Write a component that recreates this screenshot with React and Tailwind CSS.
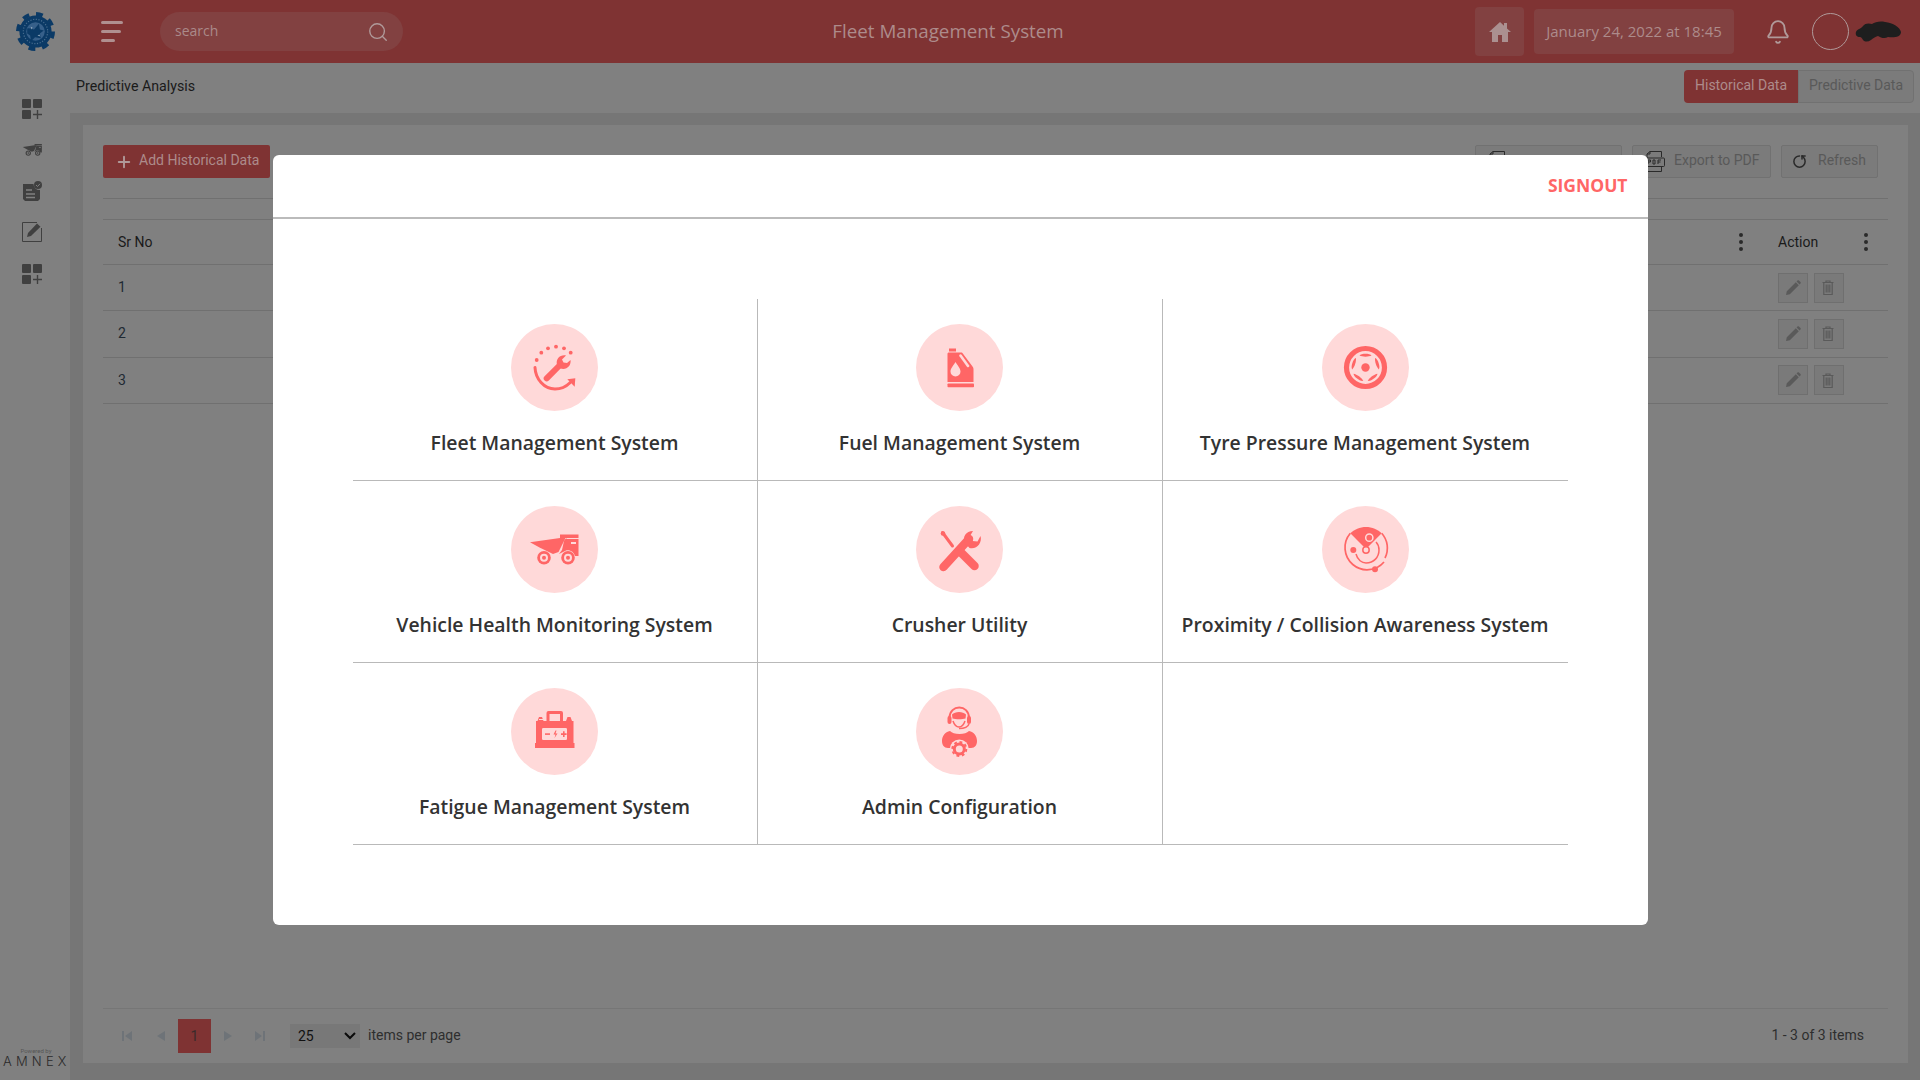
import React from "react";
import { Bell, Search, RotateCw, Plus } from "lucide-react";

const R = "#ff6666";
const P = "#ffd9d9";

const Grid = () => (
  <svg width="20" height="20" viewBox="0 0 20 20" fill="#404040">
    <rect x="0" y="0" width="9" height="9" rx="1" />
    <rect x="11" y="0" width="9" height="9" rx="1" />
    <rect x="0" y="11" width="9" height="9" rx="1" />
    <path d="M14.800 11h1.400v3.800H20v1.400h-3.800V20h-1.400v-3.800H11v-1.400h3.800z" />
  </svg>
);

const TruckShape = ({ c, bg }) => (
  <>
    <path d="M19 36.300 49 32l5.500 0-7 14-5.500 2-13-6.300z" fill={c} />
    <rect x="49" y="28.500" width="18.500" height="3.500" fill={c} />
    <path d="M56 33h11.500v17H64c-1-4-5-6.500-9-5.500l-7 3.500 3-4 2-9c.5-1.600 1.500-2.500 3-2.500z" fill={c} />
    <rect x="60" y="36" width="5" height="2" fill={bg} />
    <circle cx="33" cy="51.700" r="6.800" fill={c} />
    <circle cx="33" cy="51.700" r="4" fill={bg} />
    <circle cx="33" cy="51.700" r="2" fill={c} />
    <circle cx="57" cy="51.700" r="6.800" fill={c} />
    <circle cx="57" cy="51.700" r="4" fill={bg} />
    <circle cx="57" cy="51.700" r="2" fill={c} />
  </>
);

const icons = {
  fleet: (
    <>
      {[[25.7, 36], [30.3, 28.7], [37, 24.3], [45, 22.7], [53, 24.3], [59.7, 28.7]].map(([x, y], i) => (
        <circle key={i} cx={x} cy={y} r="1.900" fill={R} />
      ))}
      <path d="M24 43.500C24.500 55 33 65 44 65c6 0 11-2.300 15-6.300" fill="none" stroke={R} strokeWidth="3" strokeLinecap="round" />
      <path d="M56.300 55.300 64.300 54.300 63.700 62.700z" fill={R} />
      <path d="M35.700 54.300 48 42" stroke={R} strokeWidth="6" strokeLinecap="round" />
      <path d="M46 41c-1.500-6 3-10.500 9-9.500l-4 4 1.500 3 3.500.5 3.500-3c1 5.500-4 10.500-10 8.500z" fill={R} />
    </>
  ),
  fuel: (
    <>
      <rect x="33" y="24.500" width="7" height="3" fill={R} />
      <path d="M31.500 30c0-1 .5-1.500 1.500-1.500h12c1 0 1.500.5 2 1.200l9 12c1 1.300 1.500 2.300 1.500 3.800V58H31.500z" fill={R} />
      <rect x="31.500" y="59.500" width="26.500" height="3.800" rx="0.800" fill={R} />
      <path d="M44.500 31.500 52 42" stroke={P} strokeWidth="2.600" strokeLinecap="round" />
      <path d="M39.500 38c2.500 4 5 6.500 5 9.500a5 5 0 0 1-10 0c0-3 2.500-5.500 5-9.500z" fill={P} />
    </>
  ),
  tyre: (
    <>
      <circle cx="43.500" cy="43.500" r="19" fill="none" stroke={R} strokeWidth="5.200" />
      <circle cx="43.500" cy="43.500" r="4.200" fill={R} />
      {[0, 72, 144, 216, 288].map((a) => (
        <path key={a} d="M37.500 31.500c1.500-2.500 10.500-2.500 12 0-3 1.500-9 1.500-12 0z" fill={R} transform={`rotate(${a} 43.500 43.500)`} />
      ))}
    </>
  ),
  truck: <TruckShape c={R} bg={P} />,
  crusher: (
    <>
      <path d="M27.500 61 53 33" stroke={R} strokeWidth="8.500" strokeLinecap="round" />
      <path d="M49 37c-3-6 1-12 8-12l-3 5 2.500 5 5 .5 3-5.500c2 7-4 14-11 12z" fill={R} />
      <path d="M26.500 26.500 36.500 40" stroke={R} strokeWidth="3" strokeLinecap="round" />
      <circle cx="27" cy="27.500" r="2.300" fill={R} />
      <path d="M45.500 47 58.500 60" stroke={R} strokeWidth="8.500" strokeLinecap="round" />
    </>
  ),
  radar: (
    <>
      <path d="M28.300 27.300A22 22 0 1 0 62 56" fill="none" stroke={R} strokeWidth="1.700" />
      <path d="M59.700 27.300A22 22 0 0 1 63 52" fill="none" stroke={R} strokeWidth="1.700" />
      <path d="M44 43 28.300 27.300C32 23.500 38 21 44 21s12 2.500 15.700 6.300z" fill={R} />
      <circle cx="47.300" cy="31.700" r="3.600" fill={R} stroke={P} strokeWidth="1.500" />
      <path d="M34 48c1.500 6 6 9 10 9 8 0 13-6 13-13 0-3-1-6-3-8" fill="none" stroke={R} strokeWidth="1.500" />
      <circle cx="44" cy="44" r="3.200" fill={P} stroke={R} strokeWidth="1.500" />
      <circle cx="31.300" cy="44" r="3" fill={R} />
      <circle cx="53" cy="63.300" r="3" fill={R} />
    </>
  ),
  battery: (
    <>
      <path d="M35.500 33V25a2 2 0 0 1 2-2H50a2 2 0 0 1 2 2v8h-3v-7H38.500v7z" fill={R} />
      <rect x="39" y="26" width="9.500" height="7" fill={P} />
      <path d="M28 29h3l1.500 4H55l1.500-4h3l1.500 4h1.500v22h1V60H24v-5h1V33h1.500z" fill={R} />
      <rect x="31" y="40" width="25" height="12" rx="1.200" fill={P} />
      <rect x="34" y="45.300" width="5" height="1.600" fill={R} />
      <path d="M44.500 42.500 42.500 46.500h2l-1 3.500 3-4.500h-2l1-3z" fill={R} />
      <path d="M50 45.300h2v-2h1.600v2h2v1.600h-2v2h-1.600v-2h-2z" fill={R} />
      <rect x="28" y="31" width="4" height="1" fill={P} />
    </>
  ),
  admin: (
    <>
      <path d="M33.500 30c0-14 19.500-14 19.500 0" fill="none" stroke={R} strokeWidth="2" />
      <rect x="31.500" y="28" width="4" height="8" rx="2" fill={R} />
      <rect x="51" y="28" width="4" height="8" rx="2" fill={R} />
      <path d="M36 26.500c3-3.500 11-3.500 14 0l-.5 4c-3 1-10 1-13 0z" fill={R} />
      <path d="M37 33c1 3 3 6 6 6s5-3 6-6" fill="none" stroke={R} strokeWidth="1.500" />
      <path d="M53 36c-1 3-3 4.500-10 4.500" fill="none" stroke={R} strokeWidth="1.500" />
      <path d="M34 43c-5 1-8 5-8 10 0 4 2 7 6 7h23c4 0 6-3 6-7 0-5-3-9-8-10-2 2-5 3-9.500 3S36 45 34 43z" fill={R} />
      <circle cx="43.300" cy="61" r="9.500" fill={P} />
      <circle cx="43.300" cy="61" r="5" fill="none" stroke={R} strokeWidth="3" />
      <circle cx="43.300" cy="61" r="7" fill="none" stroke={R} strokeWidth="2" strokeDasharray="2.800 2.700" />
    </>
  ),
};

const systems = [
  ["Fleet Management System", "fleet"],
  ["Fuel Management System", "fuel"],
  ["Tyre Pressure Management System", "tyre"],
  ["Vehicle Health Monitoring System", "truck"],
  ["Crusher Utility", "crusher"],
  ["Proximity / Collision Awareness System", "radar"],
  ["Fatigue Management System", "battery"],
  ["Admin Configuration", "admin"],
  [null, null],
];

const Cell = ({ label, icon, index }) => (
  <div className={`h-[182px] flex flex-col items-center border-b border-[#b9b9b9] pt-[25px] ${index % 3 !== 2 ? "border-r" : ""}`}>
    {label && (
      <>
        <svg width="87" height="87" viewBox="0 0 87 87" className="shrink-0">
          <circle cx="43.500" cy="43.500" r="43.500" fill={P} />
          {icons[icon]}
        </svg>
        <div className="mt-[19px] text-[19.400px] leading-[26px] font-semibold text-[#333333] whitespace-nowrap">{label}</div>
      </>
    )}
  </div>
);

const Kebab = () => (
  <div className="flex flex-col gap-[3px] items-center w-[5px]">
    <span className="w-[4px] h-[4px] rounded-full bg-[#2a2a2a]" />
    <span className="w-[4px] h-[4px] rounded-full bg-[#2a2a2a]" />
    <span className="w-[4px] h-[4px] rounded-full bg-[#2a2a2a]" />
  </div>
);

const PencilI = () => (
  <svg width="16" height="16" viewBox="0 0 16 16" fill="#5a5a5a">
    <path d="M1 15l.8-3.800L10.800 2.200l3 3L4.800 14.200zM11.600 1.400l.9-.9c.4-.4 1-.4 1.400 0l1.600 1.600c.4.400.4 1 0 1.400l-.9.900z" />
  </svg>
);
const TrashI = () => (
  <svg width="14" height="15" viewBox="0 0 14 15" fill="none" stroke="#5a5a5a" strokeWidth="1.200">
    <path d="M0.500 2.500h11M4 2.500V1h4v1.500M1.800 2.500v12h8.400v-12M4.200 4.500v8M6 4.500v8M7.800 4.500v8" />
  </svg>
);

const Row = ({ n }) => (
  <div className="h-[46.300px] flex items-center border-b border-[#707070] text-[14px] text-[#1f2a33]">
    <div className="pl-[15px] flex-1">{n}</div>
    <div className="w-[110px] flex gap-[6px]">
      <div className="w-[30px] h-[30px] border border-[#6f6f6f] bg-[#7a7a7a] flex items-center justify-center"><PencilI /></div>
      <div className="w-[30px] h-[30px] border border-[#6f6f6f] bg-[#7a7a7a] flex items-center justify-center"><TrashI /></div>
    </div>
  </div>
);

const ToolBtn = ({ children, w }) => (
  <div className={`h-[33px] rounded-[2px] border border-[#717171] bg-[#7b7b7b] flex items-center text-[14px] text-[#595959] ${w}`}>{children}</div>
);

const Tri = ({ d }) => (
  <svg width="12" height="12" viewBox="0 0 12 12" fill="#6e7378"><path d={d} /></svg>
);

const DocIcon = ({ label }) => (
  <svg width="20" height="21" viewBox="0 0 20 21" fill="none" stroke="#2a2a2a" strokeWidth="1">
    <path d="M2 7V3l3-2.500h11.500V6M16.500 16v4.500H2V16M2 3h3V.5" />
    <rect x="0.500" y="7" width="19" height="8.500" rx="1" />
    <path d={label} strokeWidth="1" />
  </svg>
);

export default function App() {
  return (
    <div className="relative w-full h-screen overflow-hidden flex bg-[#767676] font-['Roboto',sans-serif]">
      <aside className="w-[70px] shrink-0 bg-[#808080] flex flex-col items-center relative">
        <div className="h-[63px] w-full flex items-center justify-center">
          <svg width="39" height="39" viewBox="0 0 40 40">
            <circle cx="20" cy="20" r="18" fill="none" stroke="#0b3a66" strokeWidth="4" strokeDasharray="7 7.140" />
            <circle cx="20" cy="20" r="16.500" fill="#0b3a66" />
            <circle cx="20" cy="20" r="12.500" fill="none" stroke="#4a6f90" strokeWidth="1.200" strokeDasharray="1.200 1.600" />
            <circle cx="20" cy="20" r="9.500" fill="#37608a" />
            <path d="M11.500 17c3-1 5 1 7 1l5-6 1 6 4 1-4 3 1 5-6-1-4 4-1-6-3-2z" fill="#0b3a66" />
            <path d="M15 15l2 1-1 2zM22 24l2-1 1 2z" fill="#8fa5b8" />
          </svg>
        </div>
        <div className="flex flex-col items-center mt-[36px] pr-[6px]">
          <Grid />
          <svg width="22" height="13" viewBox="15 26 55 33" className="mt-[24px]"><TruckShape c="#404040" bg="#808080" /></svg>
          <svg width="20" height="20" viewBox="0 0 20 20" className="mt-[25px]" fill="#404040">
            <path d="M1 3h10.500a6 6 0 0 0 6.500 6v9l-2 2H3l-2-2z" />
            <circle cx="16" cy="4" r="4" />
            <path d="M14 4l1.500 1.500L18 2.800" stroke="#808080" strokeWidth="1" fill="none" />
            <path d="M4 9h6M4 13h9M4 16.500h9" stroke="#808080" strokeWidth="1.300" />
          </svg>
          <svg width="20" height="20" viewBox="0 0 20 20" className="mt-[21px]">
            <path d="M15 .5H.5v19h19V6" fill="none" stroke="#404040" strokeWidth="1" />
            <path d="M5 15l1-4 9-9.500 3.500 3.300-9.500 9.200z" fill="#404040" />
          </svg>
          <div className="mt-[22px]"><Grid /></div>
        </div>
        <div className="absolute left-[3px] bottom-[11px] w-[66px] text-center text-[#2a2a2a]">
          <div className="text-[6px] leading-[7px] text-[#555555]">Powered by</div>
          <div className="text-[13px] leading-[15px] tracking-[4.200px] font-light whitespace-nowrap font-['Inter',sans-serif]">AMNEX</div>
        </div>
      </aside>

      <div className="flex-1 min-w-0 flex flex-col">
        <header className="relative h-[63px] shrink-0 bg-[#7f3333] flex items-center pl-[31px] pr-[18px] font-['Open_Sans',sans-serif]">
          <div className="flex flex-col gap-[6px] w-[22px]">
            <span className="h-[3px] w-[22px] rounded bg-[#b09090]" />
            <span className="h-[3px] w-[20px] rounded bg-[#b09090]" />
            <span className="h-[3px] w-[14px] rounded bg-[#b09090]" />
          </div>
          <div className="ml-[37px] w-[243px] h-[39px] rounded-full bg-[#824141] flex items-center justify-between pl-[15px] pr-[14px] text-[14px] text-[#aa8a8a]">
            <span className="-mt-[2px]">search</span>
            <Search size={22} strokeWidth={1.500} color="#b09a9a" />
          </div>
          <div className="absolute left-0 w-[1756px] text-center text-[18.800px] text-[#ad8b8b] pointer-events-none">Fleet Management System</div>
          <div className="ml-auto w-[49px] h-[49px] rounded-[4px] bg-[#824141] flex items-center justify-center">
            <svg width="22" height="20" viewBox="0 0 22 20" fill="#ab9090">
              <path d="M11 0 0 10h3v10h6v-7h4v7h6V10h3l-4-3.600V1h-3v2.700z" />
            </svg>
          </div>
          <div className="ml-[10px] w-[200px] h-[45px] rounded-[4px] bg-[#824141] flex items-center justify-center text-[15px] text-[#ad8b8b] whitespace-nowrap">January 24, 2022 at 18:45</div>
          <div className="ml-[31px]"><Bell size={26} strokeWidth={1.700} color="#b09a9a" /></div>
          <div className="ml-[21px] w-[37px] h-[37px] rounded-full border border-[#b09a9a]" />
          <svg width="47" height="22" viewBox="0 0 47 22" className="ml-[6px]">
            <path d="M1 11c1-3 5-3 7-6 2-3 6-3 9-2 3-2 8-3 13-2 8 1 15 5 16 10 0 5-7 6-13 5-3 2-7 1-10-1-3 1-5 2-7 4-3 2-6 2-8 0-1-2-2-3-3-3-3 0-5-2-4-5z" fill="#1e1e1e" />
          </svg>
        </header>

        <div className="h-[50px] shrink-0 bg-[#808080] flex items-center justify-between pl-[6px] pr-[6px]">
          <div className="text-[14.200px] text-[#1a1a1a] -mt-[2px]">Predictive Analysis</div>
          <div className="flex h-[33px] -mt-[3px] text-[14px]">
            <div className="w-[114px] rounded-l-[4px] bg-[#7f3333] text-[#ad8b8b] flex items-center justify-center pb-[2px]">Historical Data</div>
            <div className="w-[116px] rounded-r-[4px] border border-[#717171] bg-[#7b7b7b] text-[#595959] flex items-center justify-center pb-[2px]">Predictive Data</div>
          </div>
        </div>

        <main className="flex-1 min-h-0 bg-[#767676] pt-[12px] pl-[13px] pr-[12px] pb-[17px]">
          <div className="h-full bg-[#808080] flex flex-col px-[20px] pt-[20px]">
            <div className="flex justify-between pr-[10px]">
              <div className="w-[167px] h-[33px] rounded-[2px] bg-[#7f3333] flex items-center text-[14px] text-[#ad8b8b]">
                <Plus size={18} strokeWidth={2.500} className="ml-[12px] mr-[6px]" color="#b09a9a" />
                <span className="-mt-[2px]">Add Historical Data</span>
              </div>
              <div className="flex gap-[10px]">
                <ToolBtn w="w-[147px] pl-[12px] gap-[10px]"><DocIcon label="M4 13V9h3v2H4" /><span className="mt-[4px]">Export to Excel</span></ToolBtn>
                <ToolBtn w="w-[139px] pl-[12px] gap-[9px]"><DocIcon label="M3 13V9h2.500v2H3M8 9v4h2V9H8M13 13V9h3M13 11h2.500" /><span className="-mt-[2px]">Export to PDF</span></ToolBtn>
                <ToolBtn w="w-[97px]">
                  <RotateCw size={15} strokeWidth={2.400} color="#2a2a2a" className="ml-[10px] mr-[11px] -scale-x-100 rotate-90" />
                  <span className="-mt-[2px]">Refresh</span>
                </ToolBtn>
              </div>
            </div>
            <div className="mt-[20px] border-t border-b border-[#707070] h-[22px]" />
            <div className="h-[45px] flex items-center border-b border-[#707070] text-[14px] text-[#1a1a1a]">
              <div className="pl-[15px] flex-1">Sr No</div>
              <Kebab />
              <div className="ml-[35px] w-[85px]">Action</div>
              <Kebab />
              <div className="w-[20px]" />
            </div>
            <Row n="1" />
            <Row n="2" />
            <Row n="3" />
            <div className="mt-auto h-[55px] border-t border-[#767676] flex items-center text-[13px] text-[#2a2a2a]">
              <div className="ml-[18px] flex items-center">
                <Tri d="M1 1h2v10H1zM11 1v10L4 6z" />
                <span className="w-[22px]" />
                <Tri d="M10 1v10L2 6z" />
                <div className="ml-[11px] w-[33px] h-[34px] bg-[#7f3333] flex items-center justify-center text-[14px] text-[#3a2a2a]">1</div>
                <span className="w-[11px]" />
                <Tri d="M2 1v10l8-5z" />
                <span className="w-[20px]" />
                <Tri d="M1 1v10l7-5zM9 1h2v10H9z" />
              </div>
              <div className="ml-[24px] w-[70px] h-[24px] bg-[#787878] flex items-center justify-between pl-[8px] pr-[3px] text-[#111111] text-[14px]">
                25
                <svg width="14" height="10" viewBox="0 0 14 10" fill="none" stroke="#0a0a0a" strokeWidth="2"><path d="M2 2l5 5 5-5" /></svg>
              </div>
              <div className="ml-[8px] text-[14px] text-[#2e2e2e] -mt-[1px]">items per page</div>
              <div className="ml-auto mr-[24px] text-[14px] text-[#2e2e2e] -mt-[1px]">1 - 3 of 3 items</div>
            </div>
          </div>
        </main>
      </div>

      <div className="absolute inset-0 flex justify-center items-start pt-[155px] font-['Open_Sans',sans-serif]">
        <div className="w-[1375px] h-[770px] bg-white rounded-[6px] overflow-hidden flex flex-col">
          <div className="h-[64px] shrink-0 border-b-2 border-[#bbbbbb] flex items-center justify-end pr-[20px]">
            <span className="text-[17.500px] font-bold text-[#ff6666] -mt-[1px]">SIGNOUT</span>
          </div>
          <div className="px-[80px] pt-[80px]">
            <div className="grid grid-cols-3">
              {systems.map(([label, icon], i) => (
                <Cell key={i} label={label} icon={icon} index={i} />
              ))}
            </div>
          </div>
        </div>
      </div>
    </div>
  );
}
